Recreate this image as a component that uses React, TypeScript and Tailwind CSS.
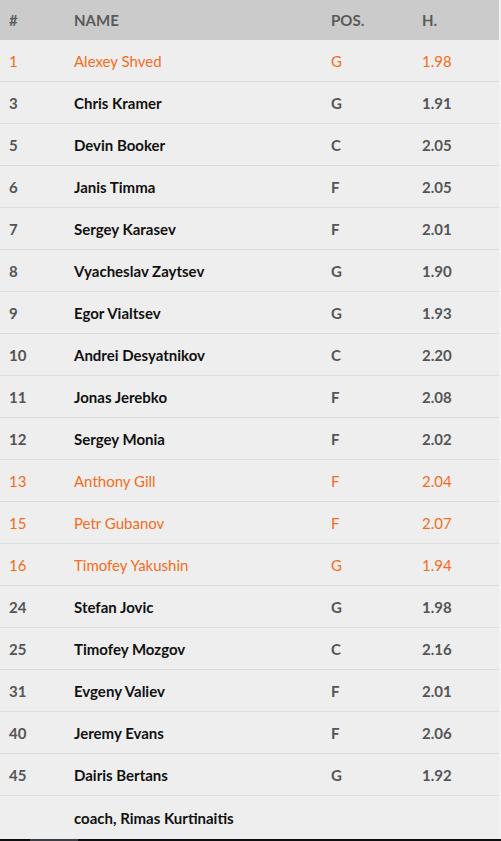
import React from 'react';

interface Player {
  num: string;
  name: string;
  pos: string;
  h: string;
  hl?: boolean;
}

const players: Player[] = [
  { num: '1', name: 'Alexey Shved', pos: 'G', h: '1.98', hl: true },
  { num: '3', name: 'Chris Kramer', pos: 'G', h: '1.91' },
  { num: '5', name: 'Devin Booker', pos: 'C', h: '2.05' },
  { num: '6', name: 'Janis Timma', pos: 'F', h: '2.05' },
  { num: '7', name: 'Sergey Karasev', pos: 'F', h: '2.01' },
  { num: '8', name: 'Vyacheslav Zaytsev', pos: 'G', h: '1.90' },
  { num: '9', name: 'Egor Vialtsev', pos: 'G', h: '1.93' },
  { num: '10', name: 'Andrei Desyatnikov', pos: 'C', h: '2.20' },
  { num: '11', name: 'Jonas Jerebko', pos: 'F', h: '2.08' },
  { num: '12', name: 'Sergey Monia', pos: 'F', h: '2.02' },
  { num: '13', name: 'Anthony Gill', pos: 'F', h: '2.04', hl: true },
  { num: '15', name: 'Petr Gubanov', pos: 'F', h: '2.07', hl: true },
  { num: '16', name: 'Timofey Yakushin', pos: 'G', h: '1.94', hl: true },
  { num: '24', name: 'Stefan Jovic', pos: 'G', h: '1.98' },
  { num: '25', name: 'Timofey Mozgov', pos: 'C', h: '2.16' },
  { num: '31', name: 'Evgeny Valiev', pos: 'F', h: '2.01' },
  { num: '40', name: 'Jeremy Evans', pos: 'F', h: '2.06' },
  { num: '45', name: 'Dairis Bertans', pos: 'G', h: '1.92' },
];

const cols = 'grid grid-cols-[65px_257px_91px_1fr] items-center px-[9px]';

export default function App() {
  return (
    <div className="w-[501px] h-[841px] bg-[#f2f2f2] flex flex-col text-[15px] font-['Lato','Liberation_Sans',sans-serif] overflow-hidden">
      <div className="w-[499px] flex-1 flex flex-col bg-[#eeeeee]">
        <div className={`${cols} h-[40px] shrink-0 bg-[#cbcbcb] text-[#5a5a5a] font-bold`}>
          <span>#</span>
          <span>NAME</span>
          <span>POS.</span>
          <span>H.</span>
        </div>

        {players.map((p) => (
          <div
            key={p.num}
            className={`${cols} h-[42px] pt-[2px] shrink-0 border-b border-[#dcdcdc] ${
              p.hl ? 'text-[#f26d21] font-normal' : 'font-bold'
            }`}
          >
            <span className={p.hl ? '' : 'text-[#555555]'}>{p.num}</span>
            <span className={p.hl ? '' : 'text-[#111111]'}>{p.name}</span>
            <span className={p.hl ? '' : 'text-[#555555]'}>{p.pos}</span>
            <span className={p.hl ? '' : 'text-[#555555]'}>{p.h}</span>
          </div>
        ))}

        <div className={`${cols} flex-1 pt-[2px] font-bold`}>
          <span></span>
          <span className="text-[#111111]">coach, Rimas Kurtinaitis</span>
          <span></span>
          <span></span>
        </div>
      </div>

      {/* scrollbar strip at the bottom */}
      <div className="h-[2px] shrink-0 bg-[#0d0d12] flex">
        <div className="ml-[30px] w-[48px] bg-[#3c3c44]"></div>
      </div>
    </div>
  );
}
